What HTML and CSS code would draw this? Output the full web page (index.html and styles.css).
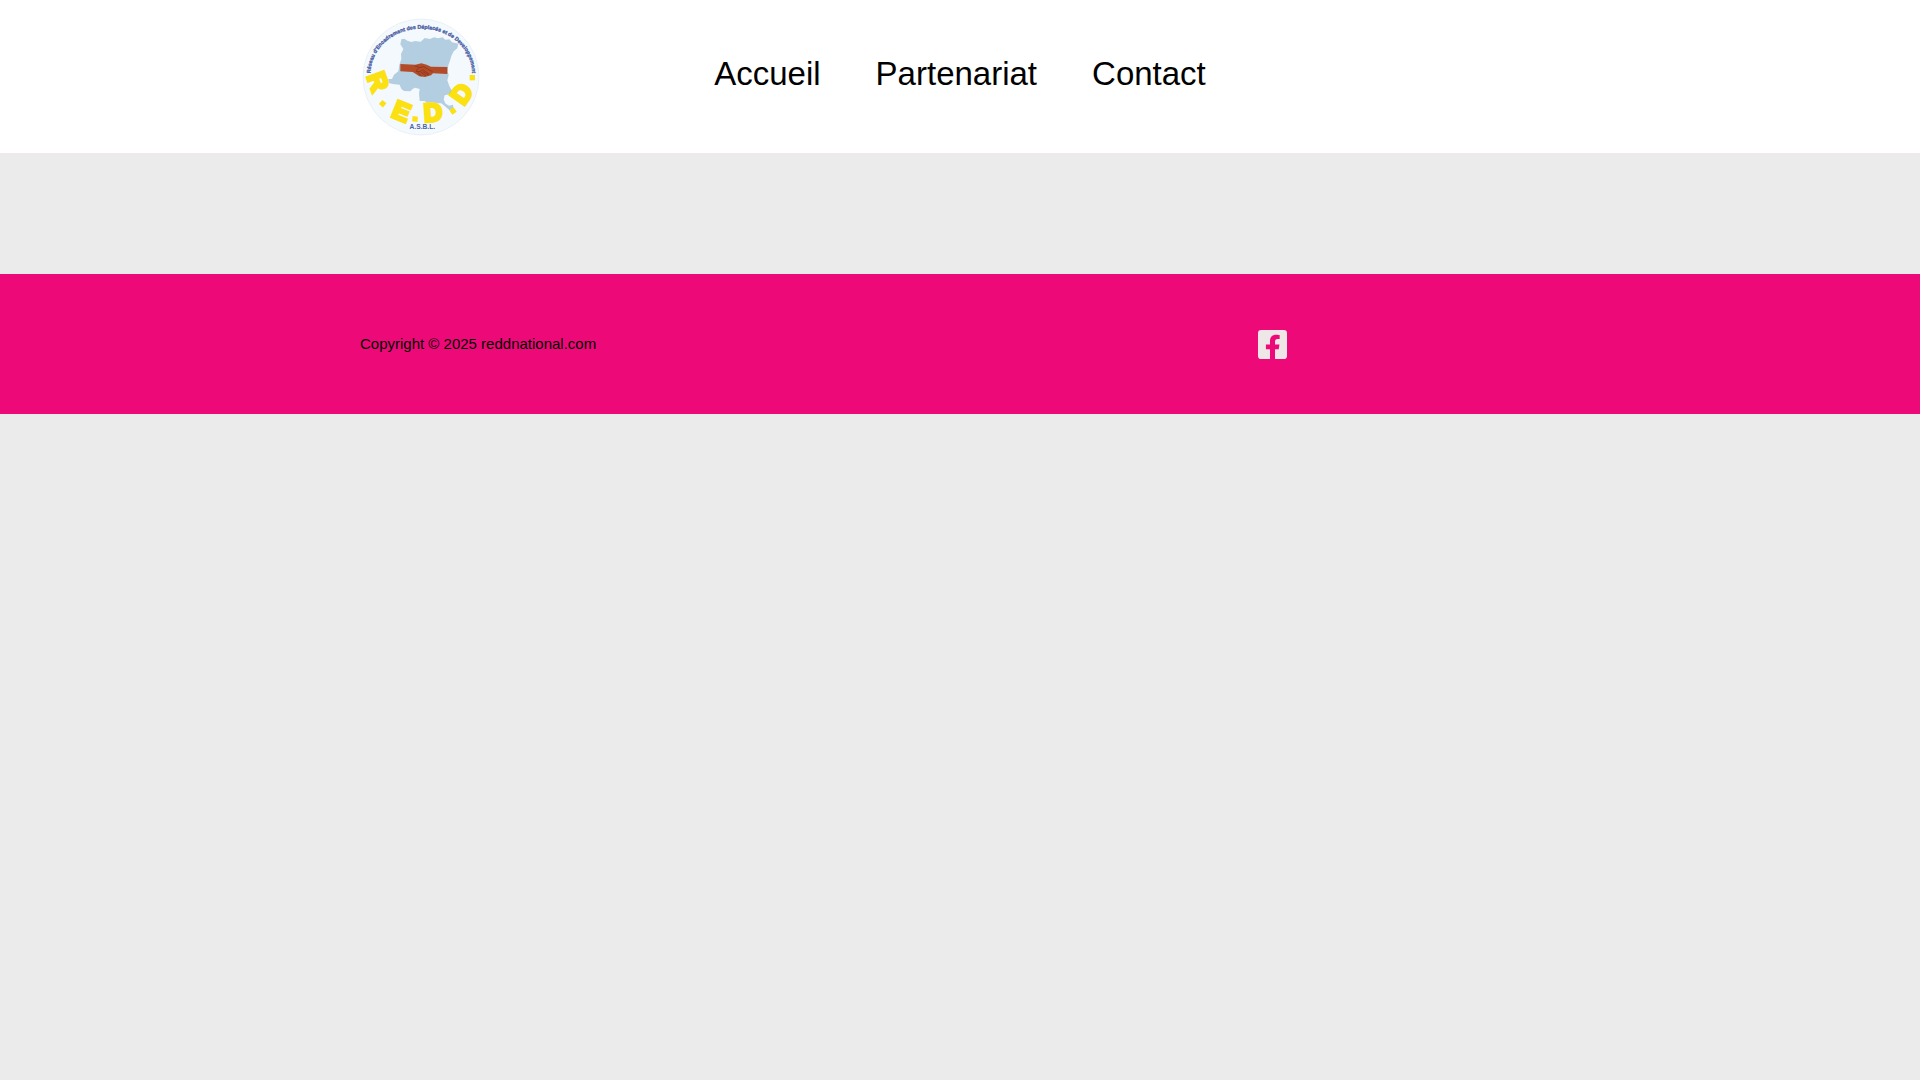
FILE: index.html
```html
<!DOCTYPE html>
<html lang="fr">
<head>
    <meta charset="UTF-8">
    <meta name="viewport" content="width=device-width, initial-scale=1.0">
    <title>REDD National</title>
    <link rel="stylesheet" href="styles.css">
</head>
<body>
    <header class="site-header">
        <div class="container header-row">
            <a class="logo" href="#" aria-label="REDD">
                <svg class="logo-img" viewBox="30 18 360 360">
                    <defs>
                        <path id="arc" d="M62 190 A152 134 0 0 1 366 190"/>
                    </defs>
                    <circle class="logo-disc" cx="213" cy="201" r="174"/>
                    <!-- carte -->
                    <path class="logo-map" d="M154 88 L163 86 L172 92 L184 96 L195 93 L212 95 L224 84 L240 87 L252 82 L264 85 L278 82 L286 89 L298 88 L306 97 L325 101 L322 115 L311 124 L304 138 L300 152 L295 166 L293 184 L296 196 L292 211 L298 228 L306 243 L302 252 L284 256 L281 269 L287 281 L297 287 L309 284 L311 303 L298 300 L285 289 L274 280 L256 280 L244 277 L232 279 L224 273 L209 273 L207 250 L209 237 L195 233 L188 237 L181 244 L162 243 L154 237 L149 224 L128 222 L113 218 L99 212 L112 207 L126 207 L132 194 L145 184 L148 164 L154 147 L153 132 L160 117 L151 103 Z"/>
                    <!-- mains -->
                    <path class="logo-hand" d="M151 162 L196 164 L214 160 L230 164 L243 170 L292 171 L292 192 L249 190 L243 196 L225 201 L208 199 L194 190 L188 186 L151 184 Z"/>
                    <path class="logo-line" d="M194 167 L210 173 L221 170 L240 181 L248 185 M205 174 L198 184 L210 185 L219 179 L237 193 M211 185 L228 198 M202 186 L215 198 M219 185 L236 196"/>
                    <text class="logo-name"><textPath href="#arc">Réseau d'Encadrement des Déplacés et de Developpement</textPath></text>
                    <g class="logo-letters">
                        <text transform="translate(60 224) rotate(70)">R</text>
                        <text transform="translate(145 328) rotate(22)">E</text>
                        <text transform="translate(251 333) rotate(-4)">D</text>
                        <text transform="translate(357 266) rotate(-55)">D</text>
                        <rect x="-8" y="-8" width="16" height="16" transform="translate(98 281) rotate(40)"/>
                        <rect x="-8" y="-8" width="16" height="16" transform="translate(195 327) rotate(6)"/>
                        <rect x="-8" y="-8" width="16" height="16" transform="translate(309 303) rotate(-35)"/>
                        <rect x="-8" y="-8" width="16" height="16" transform="translate(367 203)"/>
                    </g>
                    <text class="logo-asbl" x="217" y="356">A.S.B.L.</text>
                </svg>
            </a>
            <nav class="menu">
                <a href="#">Accueil</a>
                <a href="#">Partenariat</a>
                <a href="#">Contact</a>
            </nav>
        </div>
    </header>

    <main class="content"></main>

    <footer class="site-footer">
        <div class="container footer-row">
            <p class="copyright">Copyright © 2025 reddnational.com</p>
            <a class="social" href="#" aria-label="Facebook">
                <svg class="social-icon" viewBox="0 32 448 448">
                    <path d="M400 32H48A48 48 0 0 0 0 80v352a48 48 0 0 0 48 48h137.25V327.69h-63V256h63v-54.64c0-62.15 37-96.48 93.67-96.48 27.14 0 55.52 4.84 55.52 4.84v61h-31.27c-30.81 0-40.42 19.12-40.42 38.73V256h68.78l-11 71.69h-57.78V480H400a48 48 0 0 0 48-48V80a48 48 0 0 0-48-48z"/>
                </svg>
            </a>
        </div>
    </footer>
</body>
</html>
```
FILE: styles.css
```css
body {
    margin: 0;
    font-family: "Liberation Sans", Arial, sans-serif;
    font-size: 15px;
    line-height: 24px;
    color: #000;
    background-color: #ebebeb;
}
a {
    color: inherit;
    text-decoration: none;
}
.container {
    max-width: 1200px;
    margin: 0 auto;
}

/* header */
.site-header {
    background-color: #fff;
    border-bottom: 1px solid #f3e9ed;
}
.header-row {
    display: grid;
    grid-template-columns: 1fr auto 1fr;
    align-items: center;
    padding: 16px 0 17px;
}
.logo-img {
    display: block;
    width: 120px;
    height: 120px;
}
.menu {
    display: flex;
    gap: 55px;
    padding-bottom: 4px;
    font-size: 33px;
    line-height: 38px;
}
.menu a:hover {
    color: #ee0979;
}

/* logo */
.logo-disc {
    fill: #f4f9fd;
    stroke: #e2ebf0;
    stroke-width: 2;
}
.logo-map {
    fill: #b3cee1;
}
.logo-hand {
    fill: #b44b28;
}
.logo-line {
    fill: none;
    stroke: #7d2f1a;
    stroke-width: 2;
}
.logo-name {
    font-size: 16px;
    font-weight: bold;
    fill: #4d62a6;
    stroke: #4d62a6;
    stroke-width: 1;
}
.logo-letters {
    font-size: 76px;
    font-weight: bold;
    text-anchor: middle;
    fill: #fbe012;
}
.logo-letters text {
    stroke: #fbe012;
    stroke-width: 9;
}
.logo-asbl {
    font-size: 20px;
    font-weight: bold;
    text-anchor: middle;
    fill: #4d62a6;
}

/* contenu */
.content {
    min-height: 120px;
}

/* footer */
.site-footer {
    background-color: #ee0979;
}
.footer-row {
    display: grid;
    grid-template-columns: 1fr 1fr;
    gap: 50px;
    align-items: center;
    min-height: 140px;
}
.copyright {
    margin: 0;
}
.social {
    justify-self: center;
}
.social-icon {
    display: block;
    width: 29px;
    height: 29px;
    fill: #efe6e8;
}
```
